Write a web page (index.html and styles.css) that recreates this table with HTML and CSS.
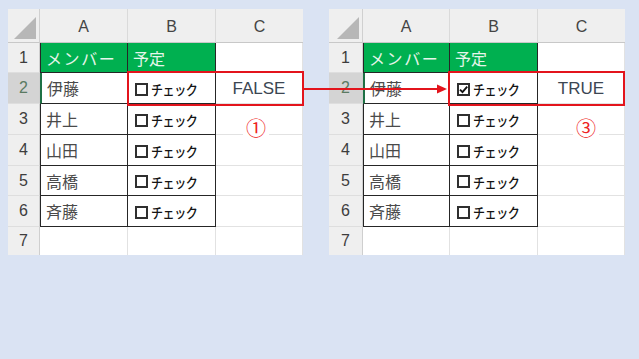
FILE: index.html
```html
<!DOCTYPE html>
<html lang="ja">
<head>
<meta charset="utf-8">
<title>チェックボックス</title>
<link rel="stylesheet" href="styles.css">
</head>
<body>
<div class="wrap">
  <div class="sheet sheet-left">
    <div class="corner"><span class="tri"></span></div>
    <div class="colh">A</div><div class="colh">B</div><div class="colh last">C</div>

    <div class="rowh">1</div>
    <div class="cell t a hd"><span class="wide">メンバー</span></div>
    <div class="cell t hd">予定</div>
    <div class="cell"></div>

    <div class="rowh sel">2</div>
    <div class="cell t a active">伊藤</div>
    <div class="cell t chk"><span class="box"></span><span class="lbl">チェック</span></div>
    <div class="cell center val">FALSE</div>

    <div class="rowh">3</div>
    <div class="cell t a">井上</div>
    <div class="cell t chk"><span class="box"></span><span class="lbl">チェック</span></div>
    <div class="cell"></div>

    <div class="rowh">4</div>
    <div class="cell t a">山田</div>
    <div class="cell t chk"><span class="box"></span><span class="lbl">チェック</span></div>
    <div class="cell"></div>

    <div class="rowh">5</div>
    <div class="cell t a">高橋</div>
    <div class="cell t chk"><span class="box"></span><span class="lbl">チェック</span></div>
    <div class="cell"></div>

    <div class="rowh">6</div>
    <div class="cell t a">斉藤</div>
    <div class="cell t chk"><span class="box"></span><span class="lbl">チェック</span></div>
    <div class="cell"></div>

    <div class="rowh lastrow">7</div>
    <div class="cell lastrow"></div>
    <div class="cell lastrow"></div>
    <div class="cell lastrow"></div>

    <div class="redbox"></div>
    <div class="note note-left">①</div>
  </div>

  <div class="sheet sheet-right">
    <div class="corner"><span class="tri"></span></div>
    <div class="colh">A</div><div class="colh">B</div><div class="colh last">C</div>

    <div class="rowh">1</div>
    <div class="cell t a hd"><span class="wide">メンバー</span></div>
    <div class="cell t hd">予定</div>
    <div class="cell"></div>

    <div class="rowh sel">2</div>
    <div class="cell t a active">伊藤</div>
    <div class="cell t chk"><span class="box checked"><svg viewBox="0 0 13 13" width="13" height="13"><path d="M3 6.6 L5.5 9.1 L10.2 3.6" fill="none" stroke="#111" stroke-width="1.9"/></svg></span><span class="lbl">チェック</span></div>
    <div class="cell center val">TRUE</div>

    <div class="rowh">3</div>
    <div class="cell t a">井上</div>
    <div class="cell t chk"><span class="box"></span><span class="lbl">チェック</span></div>
    <div class="cell"></div>

    <div class="rowh">4</div>
    <div class="cell t a">山田</div>
    <div class="cell t chk"><span class="box"></span><span class="lbl">チェック</span></div>
    <div class="cell"></div>

    <div class="rowh">5</div>
    <div class="cell t a">高橋</div>
    <div class="cell t chk"><span class="box"></span><span class="lbl">チェック</span></div>
    <div class="cell"></div>

    <div class="rowh">6</div>
    <div class="cell t a">斉藤</div>
    <div class="cell t chk"><span class="box"></span><span class="lbl">チェック</span></div>
    <div class="cell"></div>

    <div class="rowh lastrow">7</div>
    <div class="cell lastrow"></div>
    <div class="cell lastrow"></div>
    <div class="cell lastrow"></div>

    <div class="redbox"></div>
    <div class="note note-right">③</div>
  </div>

  <svg class="arrow" width="639" height="359" viewBox="0 0 639 359">
    <line x1="304" y1="89" x2="439" y2="89" stroke="#e3141c" stroke-width="2"/>
    <polygon points="437,84.5 447,89 437,93.5" fill="#e3141c"/>
  </svg>
</div>
</body>
</html>
```

FILE: styles.css
```css
html, body {
  margin: 0;
  padding: 0;
  background: #dae3f3;
}
body {
  width: 639px;
  height: 359px;
  overflow: hidden;
  font-family: "Noto Sans CJK JP", "Noto Sans", sans-serif;
}
.wrap {
  position: relative;
  display: flex;
  gap: 26px;
  padding: 9px 0 0 8px;
  align-items: flex-start;
}
.sheet {
  position: relative;
  display: grid;
  grid-template-rows: 34px 30px 31px 31px 31px 30px 31px 28px;
  background: #ffffff;
}
.sheet-left {
  grid-template-columns: 32px 88px 88px 87px;
}
.sheet-right {
  grid-template-columns: 34px 87px 88px 87px;
}
.sheet > div {
  box-sizing: border-box;
  min-width: 0;
}
.corner {
  background: #efefef;
  border-right: 1px solid #d0d0d0;
  border-bottom: 1px solid #c8c8c8;
  display: flex;
  align-items: flex-end;
  justify-content: flex-end;
  padding: 0 3px 3px 0;
}
.tri {
  width: 22px;
  height: 22px;
  background: #b7b7b7;
  clip-path: polygon(100% 0, 100% 100%, 0 100%);
}
.colh {
  background: #efefef;
  border-right: 1px solid #dadada;
  border-bottom: 1px solid #c8c8c8;
  display: flex;
  align-items: center;
  justify-content: center;
  font-family: "Liberation Sans", Arial, sans-serif;
  font-size: 16px;
  color: #444444;
  padding-top: 2px;
}
.colh.last {
  border-right: none;
}
.rowh {
  background: #efefef;
  border-right: 1px solid #cfcfcf;
  border-bottom: 1px solid #dedede;
  display: flex;
  align-items: center;
  justify-content: center;
  font-family: "Liberation Sans", Arial, sans-serif;
  font-size: 16px;
  color: #3d3d3d;
}
.rowh.sel {
  background: #d4d4d4;
  color: #5a7a62;
}
.cell {
  border-right: 1px solid #e2e2e2;
  border-bottom: 1px solid #e2e2e2;
  display: flex;
  align-items: center;
  padding-left: 5px;
  font-size: 16px;
  color: #4a4a4a;
  white-space: nowrap;
}
.cell.t {
  border-right: 1px solid #262626;
  border-bottom: 1px solid #262626;
}
.cell.a {
  border-left: 1px solid #262626;
}
.cell.active {
  border-left: 2px solid #1e7145;
}
.cell.hd {
  background: #00b050;
  color: #e6f5ea;
  padding-top: 1px;
}
.wide {
  letter-spacing: 1.6px;
}
.cell.lastrow, .rowh.lastrow {
  border-bottom: none;
}
.chk {
  padding-left: 7px;
  gap: 3px;
  padding-top: 2px;
}
.box {
  width: 13px;
  height: 13px;
  box-sizing: border-box;
  border: 2px solid #2f2f2f;
  background: #ffffff;
  flex: none;
  position: relative;
  display: block;
}
.box svg {
  position: absolute;
  left: -2px;
  top: -2px;
}
.lbl {
  display: inline-block;
  font-size: 14px;
  font-weight: 500;
  color: #151515;
  letter-spacing: -0.5px;
  transform: scaleX(0.86);
  transform-origin: left center;
}
.center {
  justify-content: center;
  padding-left: 0;
}
.val {
  font-family: "Liberation Sans", Arial, sans-serif;
  font-size: 17px;
  color: #3c4652;
  padding-top: 1px;
}
.redbox {
  position: absolute;
  left: 119px;
  top: 62px;
  width: 177px;
  height: 35px;
  border: 2px solid #e3141c;
  z-index: 2;
  pointer-events: none;
}
.note {
  position: absolute;
  top: 108px;
  width: 26px;
  text-align: center;
  background: #ffffff;
  color: #ee2222;
  font-size: 20px;
  line-height: 22px;
  z-index: 1;
}
.note-left {
  left: 235px;
}
.note-right {
  left: 244px;
}
.arrow {
  position: absolute;
  left: 0;
  top: 0;
  pointer-events: none;
  z-index: 3;
}
```
